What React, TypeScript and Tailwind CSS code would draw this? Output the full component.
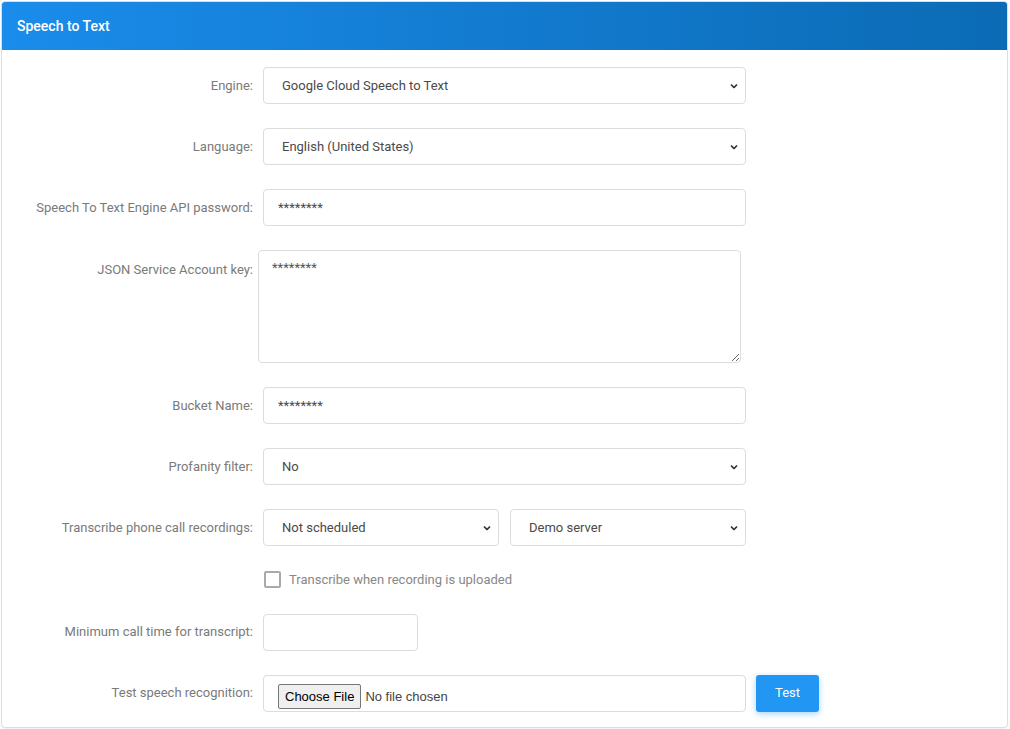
import type { ReactNode } from "react";

const font = { fontFamily: "Roboto, 'Liberation Sans', sans-serif" };
const native = { fontFamily: "'Liberation Sans', Arial, sans-serif" };

function Chevron() {
  return (
    <svg
      aria-hidden
      viewBox="0 0 8 5"
      className="pointer-events-none absolute right-[8px] top-1/2 h-[5px] w-[8px] -translate-y-1/2"
    >
      <path d="M1 1l3 3 3-3" fill="none" stroke="#333" strokeWidth="1.7" />
    </svg>
  );
}

function Select({ value, className = "" }: { value: string; className?: string }) {
  return (
    <div className={`relative ${className}`}>
      <select
        defaultValue={value}
        className="h-[37px] w-full appearance-none rounded-[4px] border border-[#dcdcdc] bg-white pl-[18px] pr-8 text-[13px] text-[#4a4a4a] outline-none"
      >
        <option>{value}</option>
      </select>
      <Chevron />
    </div>
  );
}

function Row({
  label,
  children,
  top = false,
}: {
  label: string;
  children: ReactNode;
  top?: boolean;
}) {
  return (
    <div className={`flex ${top ? "items-start" : "items-center"}`}>
      <label
        className={`w-[251px] shrink-0 text-right text-[13px] text-[#7a7a7a] ${
          top ? "pt-[10px]" : ""
        }`}
      >
        {label}
      </label>
      <div className="ml-[10px] flex items-center">{children}</div>
    </div>
  );
}

export default function App() {
  return (
    <div className="min-h-[729px] bg-white pl-[1px] pr-[2px] pt-[1px]" style={font}>
      <div className="overflow-hidden rounded-[4px] border border-[#dedede] bg-white shadow-[0_1px_2px_rgba(0,0,0,0.06)]">
        <div className="flex h-[48px] items-center bg-gradient-to-r from-[#1a8ceb] to-[#0b6bb5] px-[15px] text-[14px] font-medium text-white">
          Speech to Text
        </div>

        <div className="flex flex-col gap-[24px] pb-[15px] pt-[17px]">
          <Row label="Engine:">
            <Select value="Google Cloud Speech to Text" className="w-[483px]" />
          </Row>
          <Row label="Language:">
            <Select value="English (United States)" className="w-[483px]" />
          </Row>
          <Row label="Speech To Text Engine API password:">
            <input
              type="text"
              defaultValue="********"
              className="h-[37px] w-[483px] rounded-[4px] border border-[#dcdcdc] bg-white px-[14px] text-[13px] text-[#4a4a4a] outline-none"
            />
          </Row>
          <Row label="JSON Service Account key:" top>
            <textarea
              defaultValue="********"
              className="-ml-[5px] h-[113px] w-[483px] rounded-[4px] border border-[#dcdcdc] bg-white px-[13px] pt-[9px] text-[13px] leading-[16px] text-[#555] outline-none"
            />
          </Row>
          <Row label="Bucket Name:">
            <input
              type="text"
              defaultValue="********"
              className="h-[37px] w-[483px] rounded-[4px] border border-[#dcdcdc] bg-white px-[14px] text-[13px] text-[#4a4a4a] outline-none"
            />
          </Row>
          <Row label="Profanity filter:">
            <Select value="No" className="w-[483px]" />
          </Row>
          <Row label="Transcribe phone call recordings:">
            <div className="flex gap-[11px]">
              <Select value="Not scheduled" className="w-[236px]" />
              <Select value="Demo server" className="w-[236px]" />
            </div>
          </Row>
          <div className="flex items-center pl-[262px]">
            <span className="block h-[17px] w-[17px] rounded-[2px] border-2 border-[#a6abb0] bg-white" />
            <span className="ml-[8px] text-[13px] text-[#888]">
              Transcribe when recording is uploaded
            </span>
          </div>
          <Row label="Minimum call time for transcript:">
            <input
              type="text"
              className="h-[37px] w-[155px] rounded-[4px] border border-[#dcdcdc] bg-white px-[14px] text-[13px] text-[#4a4a4a] outline-none"
            />
          </Row>
          <Row label="Test speech recognition:">
            <div className="flex h-[37px] w-[483px] items-start rounded-[4px] border border-[#dcdcdc] bg-white pl-[14px] pt-[8px]">
              <span
                className="rounded-[2px] border border-[#767676] bg-[#efefef] px-[6px] py-[2px] text-[13px] text-black"
                style={native}
              >
                Choose File
              </span>
              <span className="ml-[4px] pt-[3px] text-[13px] text-[#444]" style={native}>
                No file chosen
              </span>
            </div>
            <button className="ml-[10px] h-[37px] w-[63px] rounded-[3px] bg-[#2196f3] text-[13px] text-white shadow-[0_2px_6px_rgba(33,150,243,0.4)]">
              Test
            </button>
          </Row>
        </div>
      </div>
    </div>
  );
}
